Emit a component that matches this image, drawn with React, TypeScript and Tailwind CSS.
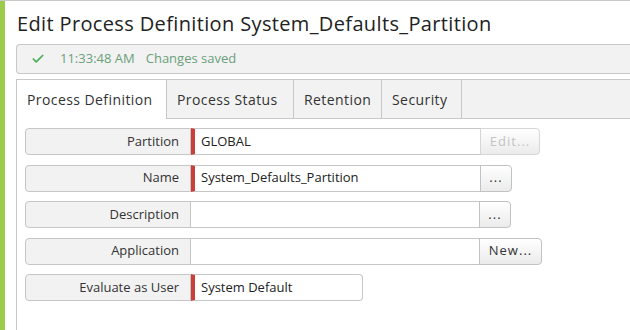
import { Check } from "lucide-react";

const font = { fontFamily: '"Open Sans", "Noto Sans", sans-serif' };

type Row = { label: string; value: string; required: boolean; button?: string; btnW?: string; disabled?: boolean; inputW: string };

const rows: Row[] = [
  { label: "Partition", value: "GLOBAL", required: true, button: "Edit...", btnW: "w-[60px]", disabled: true, inputW: "w-[290px]" },
  { label: "Name", value: "System_Defaults_Partition", required: true, button: "...", btnW: "w-[32px]", inputW: "w-[290px]" },
  { label: "Description", value: "", required: false, button: "...", btnW: "w-[32px]", inputW: "w-[290px]" },
  { label: "Application", value: "", required: false, button: "New...", btnW: "w-[63px]", inputW: "w-[290px]" },
  { label: "Evaluate as User", value: "System Default", required: true, inputW: "w-[172px]" },
];

const tabs = ["Process Definition", "Process Status", "Retention", "Security"];
const tabW = ["w-[150px]", "w-[127px]", "w-[88px]", "w-[80px]"];

function FieldRow({ row }: { row: Row }) {
  return (
    <div className="flex h-[27px] items-stretch text-[13px]">
      <div className="flex w-[166px] shrink-0 items-center justify-end rounded-l-[4px] border border-[#c6c6c6] bg-[#f2f2f2] pr-[11px] text-[#333]">
        {row.label}
      </div>
      <div
        className={`flex ${row.inputW} shrink-0 items-center border-y border-r border-[#c6c6c6] bg-white pl-[6px] text-[#222] ${row.button ? "" : "rounded-r-[4px]"} ${row.required ? "border-l-[4px] border-l-[#c9403a]" : "-ml-px border-l border-l-[#c6c6c6] pl-[9px]"}`}
      >
        {row.value}
      </div>
      {row.button && (
        <button
          className={`-ml-px flex ${row.btnW} items-center justify-center rounded-r-[4px] border bg-gradient-to-b from-white to-[#ebebeb] text-[13px] tracking-[0.08em] ${row.disabled ? "border-[#d6d6d6] text-[#c4c4c4]" : "border-[#c2c2c2] text-[#333]"}`}
          style={font}
        >
          {row.button}
        </button>
      )}
    </div>
  );
}

export default function App() {
  return (
    <div className="flex h-[330px] w-[630px] overflow-hidden border-t border-[#c8c8c8] bg-white" style={font}>
      <div className="w-[5px] shrink-0 bg-[#9dcb4b]" />
      <div className="flex min-w-0 flex-1 flex-col pl-[11px]">
        <h1 className="flex h-[43px] items-center pl-px pt-[2px] text-[20px] tracking-[0.018em] text-[#222]">
          Edit Process Definition System_Defaults_Partition
        </h1>
        <div className="flex h-[30px] items-center gap-[15px] rounded-l-[4px] border-y border-l border-[#c8c8c8] bg-[#f2f2f2] pl-[14px] text-[13px]">
          <Check size={14} strokeWidth={3} className="text-[#4cae56]" />
          <span className="text-[#6aa07a]">11:33:48 AM</span>
          <span className="-ml-[4px] text-[#6aa07a]">Changes saved</span>
        </div>
        <div className="mt-[5px] flex h-[40px] border-t border-l border-[#c8c8c8] bg-[#f2f2f2]">
          {tabs.map((t, i) => (
            <div
              key={t}
              className={`flex ${tabW[i]} shrink-0 items-center border-r border-[#c8c8c8] pl-[10px] text-[14px] tracking-[0.03em] text-[#333] ${i === 0 ? "bg-white" : "border-b"}`}
            >
              {t}
            </div>
          ))}
          <div className="flex-1 border-b border-[#c8c8c8]" />
        </div>
        <div className="flex flex-1 flex-col gap-[9.5px] border-l border-[#c8c8c8] pl-[8px] pt-[9px]">
          {rows.map((r) => (
            <FieldRow key={r.label} row={r} />
          ))}
        </div>
      </div>
    </div>
  );
}
